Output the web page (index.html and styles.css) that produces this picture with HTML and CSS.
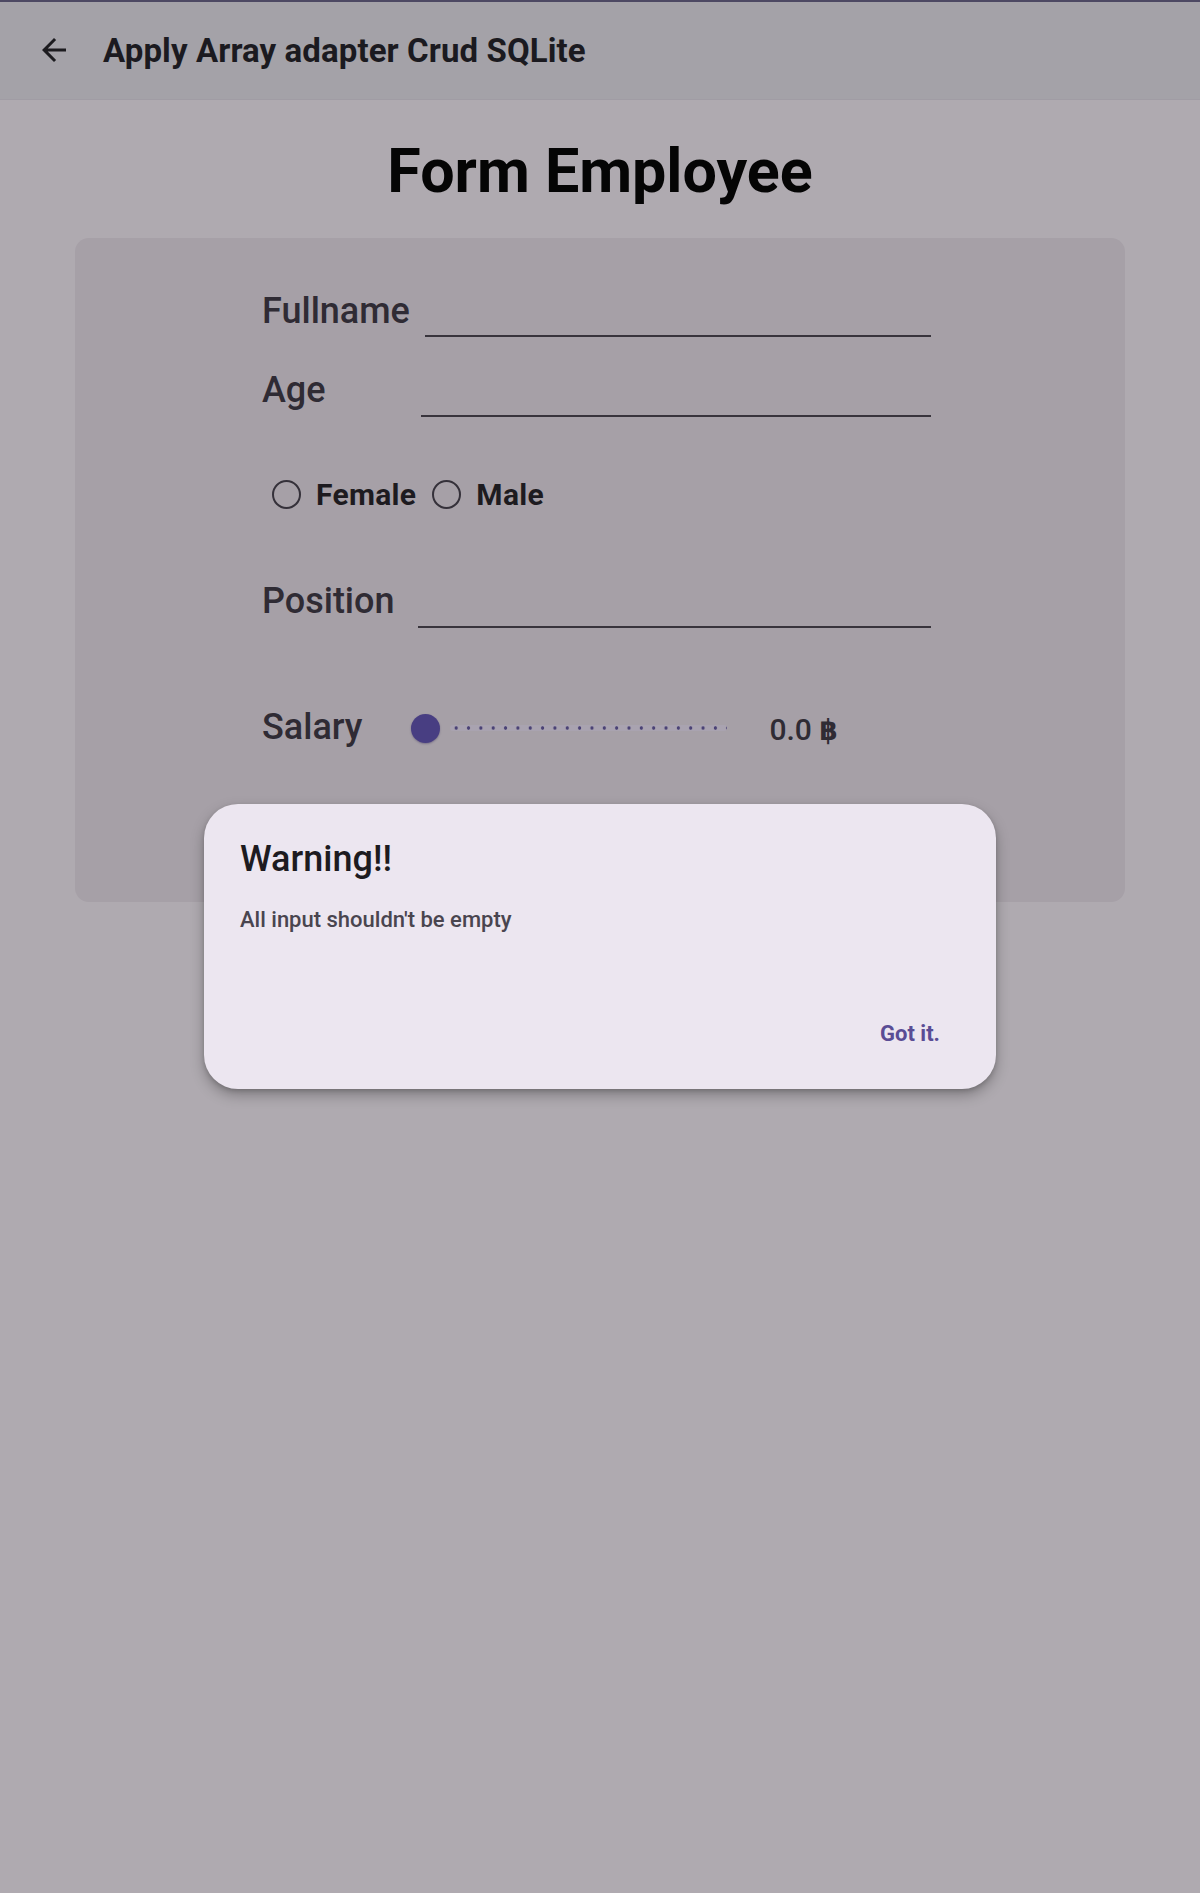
FILE: index.html
```html
<!DOCTYPE html>
<html lang="en">
<head>
<meta charset="utf-8">
<title>Apply Array adapter Crud SQLite</title>
<link rel="stylesheet" href="styles.css">
</head>
<body>
<header class="appbar">
  <svg class="back" viewBox="0 0 24 24" width="36" height="36"><path d="M20 11H7.83l5.59-5.59L12 4l-8 8 8 8 1.41-1.41L7.83 13H20v-2z" fill="#1c1b1f"/></svg>
  <span class="appbar-title">Apply Array adapter Crud SQLite</span>
</header>
<main class="page">
  <h1 class="heading">Form Employee</h1>
  <section class="card">
    <div class="row row-full">
      <span class="label">Fullname</span>
      <span class="field field-full"></span>
    </div>
    <div class="row row-age">
      <span class="label">Age</span>
      <span class="field field-age"></span>
    </div>
    <div class="radios">
      <span class="radio"></span><span class="radio-text">Female</span>
      <span class="radio radio-2"></span><span class="radio-text">Male</span>
    </div>
    <div class="row row-pos">
      <span class="label">Position</span>
      <span class="field field-pos"></span>
    </div>
    <div class="row row-sal">
      <span class="label label-sal">Salary</span>
      <div class="slider">
        <span class="thumb"></span>
        <span class="ticks"></span>
      </div>
      <span class="amount">0.0 <span class="baht">฿</span></span>
    </div>
  </section>
</main>
<div class="dialog">
  <h2 class="dialog-title">Warning!!</h2>
  <p class="dialog-msg">All input shouldn't be empty</p>
  <div class="dialog-actions"><span class="dialog-btn">Got it.</span></div>
</div>
</body>
</html>
```
FILE: styles.css
```css
* { box-sizing: border-box; }
html, body { margin: 0; padding: 0; }
body {
  background: #afaab0;
  font-family: Roboto, "Liberation Sans", sans-serif;
  width: 1200px;
  height: 1893px;
  position: relative;
  overflow: hidden;
}
.appbar {
  height: 100px;
  border-top: 2px solid #4d4963;
  border-bottom: 1px solid #a09ca4;
  background: #a4a2a8;
  display: flex;
  align-items: center;
  padding-left: 36px;
}
.back { display: block; flex: none; margin-top: -1px; }
.appbar-title {
  margin-left: 31px;
  font-size: 33px;
  font-weight: 700;
  color: #1b1a20;
  letter-spacing: 0.1px;
}
.page { padding: 0 75px; }
.heading {
  margin: 36px 0 0;
  text-align: center;
  font-size: 61px;
  line-height: 70px;
  font-weight: 700;
  color: #050505;
}
.card {
  margin-top: 32px;
  height: 664px;
  background: #a6a0a7;
  border-radius: 14px;
  padding: 48px 0 0 187px;
}
.row { display: flex; align-items: flex-start; height: 50px; }
.label {
  width: 156px;
  flex: none;
  font-size: 36px;
  line-height: 50px;
  font-weight: 500;
  color: #2f2b34;
}
.field {
  height: 51px;
  border-bottom: 2px solid #38343c;
}
.field-full { margin-left: 7px; width: 506px; }
.field-age { margin-left: 3px; width: 510px; margin-top: 1px; }
.field-pos { margin-left: 0; width: 513px; margin-top: 1px; }
.row-age { margin-top: 29px; }
.radios {
  margin-top: 54px;
  height: 50px;
  display: flex;
  align-items: center;
  padding-left: 10px;
}
.radio {
  width: 29px;
  height: 29px;
  border: 2.5px solid #35313a;
  border-radius: 50%;
  flex: none;
}
.radio-2 { margin-left: 16px; }
.radio-text {
  margin-left: 15px;
  font-size: 30px;
  font-weight: 700;
  color: #1d1b20;
  letter-spacing: 0.3px;
}
.row-pos { margin-top: 57px; }
.row-sal { margin-top: 76px; align-items: center; }
.label-sal { width: auto; }
.slider {
  margin-left: 49px;
  width: 316px;
  height: 30px;
  display: flex;
  align-items: center;
  margin-top: 2px;
}
.thumb {
  width: 29px;
  height: 29px;
  border-radius: 50%;
  background: #483e82;
  box-shadow: 0 1px 2px rgba(40, 30, 80, 0.35);
  flex: none;
}
.ticks {
  margin-left: 10px;
  width: 280px;
  height: 6px;
  background-image: radial-gradient(circle, #4a4275 1.4px, rgba(74,66,117,0) 2px);
  background-size: 12.35px 6px;
  background-repeat: repeat-x;
  background-color: rgba(180, 170, 205, 0.25);
  border-radius: 3px;
}
.amount {
  margin-left: 42px;
  font-size: 30px;
  font-weight: 500;
  color: #2f2b34;
  margin-top: 4px;
  white-space: nowrap;
}
.baht {
  font-family: "DejaVu Sans Condensed", "DejaVu Sans", sans-serif;
  font-weight: 700;
  font-size: 29px;
}
.dialog {
  position: absolute;
  left: 204px;
  top: 804px;
  width: 792px;
  height: 285px;
  background: #ece6f0;
  border-radius: 34px;
  box-shadow: 0 6px 14px rgba(0, 0, 0, 0.28), 0 2px 4px rgba(0,0,0,0.15);
  padding: 33px 36px 0 36px;
}
.dialog-title {
  margin: 0;
  font-size: 36px;
  line-height: 44px;
  font-weight: 500;
  color: #1d1b20;
}
.dialog-msg {
  margin: 25px 0 0;
  font-size: 22px;
  line-height: 28px;
  font-weight: 500;
  color: #49454f;
}
.dialog-actions {
  display: flex;
  justify-content: flex-end;
  margin-top: 86px;
  padding-right: 20px;
}
.dialog-btn {
  font-size: 22px;
  line-height: 28px;
  font-weight: 700;
  color: #5a4d95;
}
```
